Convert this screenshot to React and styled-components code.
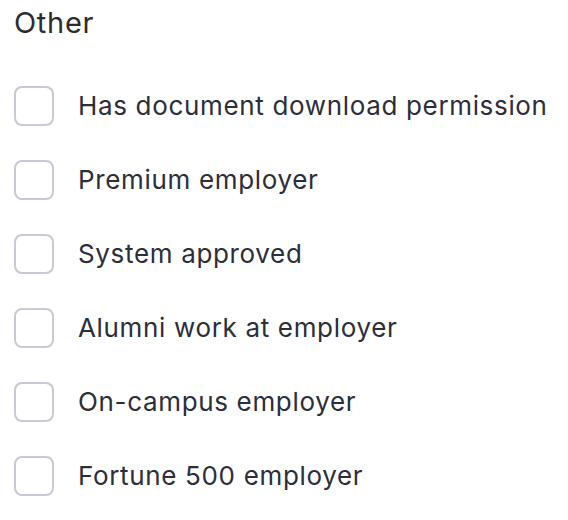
import styled, { createGlobalStyle } from 'styled-components';

/* ---------------------------------- style --------------------------------- */
const GlobalStyle = createGlobalStyle`
  body {
    margin: 0;
    background: #ffffff;
    font-family: Inter, 'Noto Sans', sans-serif;
  }
`;

const Section = styled.section`
  padding: 4px 14px 0 14px;
`;

const Heading = styled.h3`
  margin: 0;
  font-size: 29px;
  font-weight: 400;
  line-height: 38px;
  color: #2b2b2b;
  letter-spacing: 0.7px;
`;

const List = styled.div`
  display: flex;
  flex-direction: column;
  gap: 34px;
  margin-top: 44px;
`;

const Row = styled.label`
  display: flex;
  align-items: center;
  gap: 24px;
  cursor: pointer;
`;

const Box = styled.span`
  width: 36px;
  height: 36px;
  flex: none;
  border: 2px solid #c7c9d6;
  border-radius: 8px;
  background: #ffffff;
`;

const Label = styled.span`
  font-size: 26px;
  line-height: 40px;
  color: #2c2e3a;
  letter-spacing: 0.66px;
`;

/* -------------------------------- component ------------------------------- */
const options = [
  'Has document download permission',
  'Premium employer',
  'System approved',
  'Alumni work at employer',
  'On-campus employer',
  'Fortune 500 employer',
];

function App() {
  return (
    <>
      <GlobalStyle />
      <Section>
        <Heading>Other</Heading>
        <List>
          {options.map((opt) => (
            <Row key={opt}>
              <Box />
              <Label>{opt}</Label>
            </Row>
          ))}
        </List>
      </Section>
    </>
  );
}

export default App;
